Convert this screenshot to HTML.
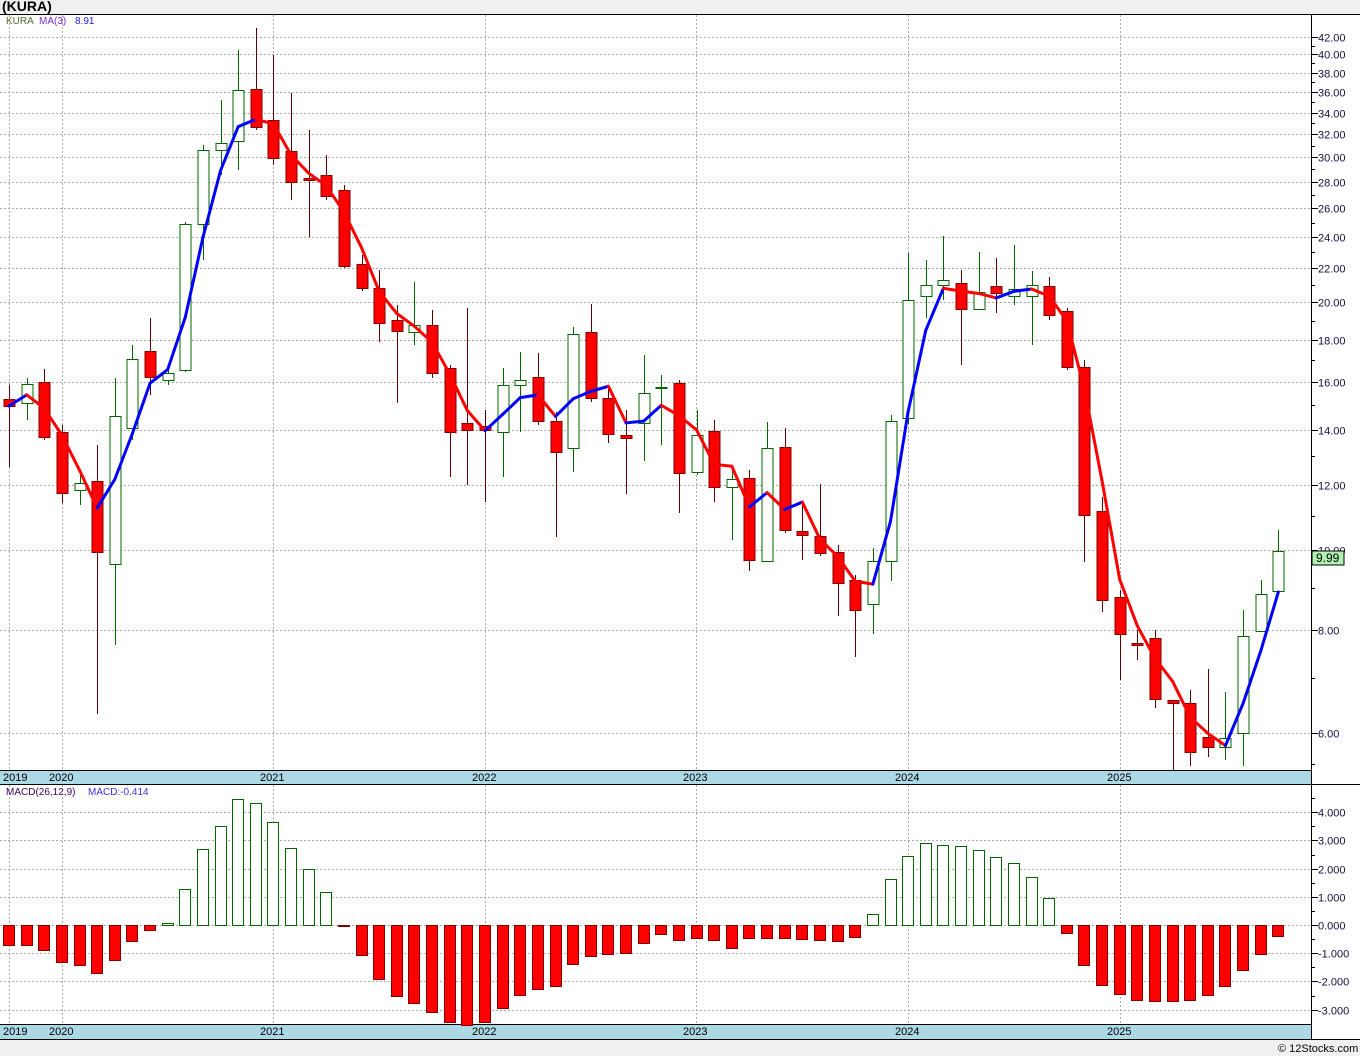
<!DOCTYPE html>
<html><head><meta charset="utf-8"><style>
html,body{margin:0;padding:0;background:#f0f0f0;width:1360px;height:1056px;overflow:hidden;font-family:"Liberation Sans",sans-serif}
svg{position:absolute;left:0;top:0}
</style></head><body>
<svg id="s" width="1360" height="1056" xmlns="http://www.w3.org/2000/svg" font-family="Liberation Sans, sans-serif">
<rect x="0" y="14" width="1360" height="1026" fill="#fff"/>
<text x="2" y="11" font-size="14" font-weight="bold" fill="#000">(KURA)</text>
<line x1="0" y1="14.5" x2="1360" y2="14.5" stroke="#000"/>
<g id="grid" stroke="#aaa" stroke-dasharray="2,2" stroke-width="1"></g>
<rect x="0" y="771" width="1311" height="13" fill="#add8e6"/>
<line x1="0" y1="770.5" x2="1311" y2="770.5" stroke="#000"/>
<line x1="0" y1="784.5" x2="1360" y2="784.5" stroke="#000"/>
<rect x="0" y="1025" width="1311" height="14" fill="#add8e6"/>
<line x1="0" y1="1024.5" x2="1311" y2="1024.5" stroke="#000"/>
<line x1="0" y1="1039.5" x2="1360" y2="1039.5" stroke="#000"/>
<rect x="0" y="1040" width="1360" height="16" fill="#f0f0f0"/>
<line x1="1311.5" y1="14" x2="1311.5" y2="1040" stroke="#000"/>
<g id="c"></g>
<g font-size="11" fill="#000">
<text x="3" y="781">2019</text><text x="49" y="781">2020</text><text x="260" y="781">2021</text><text x="472" y="781">2022</text><text x="683" y="781">2023</text><text x="895" y="781">2024</text><text x="1107" y="781">2025</text>
<text x="3" y="1035">2019</text><text x="49" y="1035">2020</text><text x="260" y="1035">2021</text><text x="472" y="1035">2022</text><text x="683" y="1035">2023</text><text x="895" y="1035">2024</text><text x="1107" y="1035">2025</text>
</g>
<text x="6" y="24" font-size="10" fill="#556b2f">KURA</text>
<text x="39" y="24" font-size="10" fill="#7b2be0">MA(3)</text>
<text x="75" y="24" font-size="10" fill="#2020e0">8.91</text>
<text x="6" y="795" font-size="10" fill="#400060">MACD(26,12,9)</text>
<text x="88" y="795" font-size="10" fill="#4030e0">MACD:-0.414</text>
<g id="ax" font-size="11" fill="#101040"></g>
<rect x="1312" y="551" width="32" height="14" fill="#b0f0b0" stroke="#000"/>
<text x="1316" y="562" font-size="12" fill="#000">9.99</text>
<text x="1278" y="1052" font-size="11" fill="#000">© 12Stocks.com</text>
</svg>
<script>
var NS="http://www.w3.org/2000/svg";
function el(p,t,a){var e=document.createElementNS(NS,t);for(var k in a)e.setAttribute(k,a[k]);p.appendChild(e);return e;}
var g=document.getElementById('grid'),c=document.getElementById('c'),ax=document.getElementById('ax');
function py(p){return 733-357.7*Math.log(p/6);}
function yp(y){return 6*Math.exp((733-y)/357.7);}
[9,62,273,485,696,908,1120].forEach(function(x){el(g,'line',{x1:x+.5,y1:15,x2:x+.5,y2:770});el(g,'line',{x1:x+.5,y1:785,x2:x+.5,y2:1024});});
for(var p=6;p<=42;p+=2){var y=Math.round(py(p))+.5;el(g,'line',{x1:0,y1:y,x2:1311,y2:y});
 el(ax,'line',{x1:1311,y1:y,x2:1318,y2:y,stroke:'#000'});
 if(p!=10||true){var t=el(ax,'text',{x:1318,y:y+4});t.textContent=p.toFixed(2);}
 var y2=Math.round(py(p+1))+.5;if(p<42)el(ax,'line',{x1:1311,y1:y2,x2:1315,y2:y2,stroke:'#000'});}
for(var p=5.5;p<6;p+=0.5){var y=Math.round(py(p))+.5;el(ax,'line',{x1:1311,y1:y,x2:1315,y2:y,stroke:'#000'});}
var mv=[[4,812],[3,840],[2,869],[1,897],[0,925],[-1,953],[-2,981],[-3,1010]];
mv.forEach(function(m){var y=m[1]+.5;el(g,'line',{x1:0,y1:y,x2:1311,y2:y});el(ax,'line',{x1:1311,y1:y,x2:1318,y2:y,stroke:'#000'});
 var t=el(ax,'text',{x:1318,y:y+4});t.textContent=m[0].toFixed(3);
 el(ax,'line',{x1:1311,y1:y-14,x2:1315,y2:y-14,stroke:'#000'});});
// [top of body, bottom of body, high, low, up?]
var C=[[399,406,385,467,0],[384,403,378,420,1],[382,437,369,440,0],[432,493,425,503,0],[483,490,470,505,1],[481,552,445,714,0],[416,564,378,645,1],[359,428,345,440,1],[351,377,318,395,0],[373,380,365,385,1],[224,370,222,372,1],[150,224,145,260,1],[143,150,100,175,1],[90,141,50,170,1],[89,127,28,130,0],[120,158,55,165,0],[151,182,93,200,0],[178,180,130,237,0],[175,196,155,200,0],[190,266,185,268,0],[264,288,255,291,0],[288,323,270,342,0],[320,331,305,403,0],[325,332,282,345,1],[325,373,310,378,0],[368,432,365,477,0],[423,430,308,485,0],[426,430,410,502,0],[385,432,368,477,1],[380,385,352,432,1],[377,421,353,425,0],[421,452,412,537,0],[334,448,327,472,1],[332,398,304,402,0],[398,434,385,443,0],[435,438,410,494,0],[393,423,355,461,1],[387,388,375,445,1],[383,473,380,513,0],[435,472,410,475,1],[431,487,420,502,0],[479,487,467,540,1],[478,560,470,571,0],[448,561,422,562,1],[447,530,428,533,0],[531,535,503,560,0],[536,553,484,556,0],[552,583,545,616,0],[580,610,575,657,0],[561,604,548,634,1],[421,561,415,581,1],[300,418,253,424,1],[285,296,260,318,1],[280,285,236,300,1],[283,309,270,365,0],[292,309,252,310,1],[286,293,258,313,0],[289,296,245,305,1],[285,296,271,345,1],[286,315,277,320,0],[311,367,308,370,0],[367,515,360,562,0],[511,600,497,612,0],[597,634,590,680,0],[643,645,630,660,0],[638,699,630,708,0],[700,703,700,770,0],[703,752,690,766,0],[737,747,669,757,0],[738,747,692,760,1],[636,733,610,766,1],[594,631,580,632,1],[551,591,530,592,1]];
var closes=[];
C.forEach(function(d,i){var x=Math.round(9+17.63*i);var up=d[4];
 var col=up?'#006400':'#5a0000';
 el(c,'line',{x1:x+.5,y1:d[2],x2:x+.5,y2:d[3],stroke:col});
 el(c,'rect',{x:x-5,y:d[0]+.5,width:11,height:Math.max(1,d[1]-d[0]),fill:up?'#fff':'#f00',stroke:up?'#006400':'#800000'});
 closes.push(yp(up?d[0]:d[1]));});
var ma=[];for(var i=0;i<closes.length;i++){var s=0,n=0;for(var j=Math.max(0,i-2);j<=i;j++){s+=closes[j];n++;}ma.push(s/n);}
for(var i=1;i<ma.length;i++){var x1=9+17.63*(i-1),x2=9+17.63*i;
 el(c,'line',{x1:x1,y1:py(ma[i-1]),x2:x2,y2:py(ma[i]),stroke:ma[i]>=ma[i-1]?'#0000ff':'#ff0000','stroke-width':3,'stroke-linecap':'round'});}
var M=[945,945,950,962,965,973,960,941,930,923,889,849,826,799,803,822,848,869,892,926,955,979,996,1003,1012,1022,1025,1022,1008,995,989,986,964,956,954,953,943,934,940,938,940,948,938,938,938,939,940,941,937,914,879,856,843,845,846,850,857,863,877,898,933,965,985,994,1000,1001,1001,1000,995,986,970,954,936];
M.forEach(function(v,i){var x=Math.round(9+17.63*i);
 if(v<925)el(c,'rect',{x:x-5.5,y:v+.5,width:11,height:925-v,fill:'#fff',stroke:'#006400'});
 else el(c,'rect',{x:x-5.5,y:925.5,width:11,height:v-925,fill:'#f00',stroke:'#800000'});});
</script>
</body></html>
